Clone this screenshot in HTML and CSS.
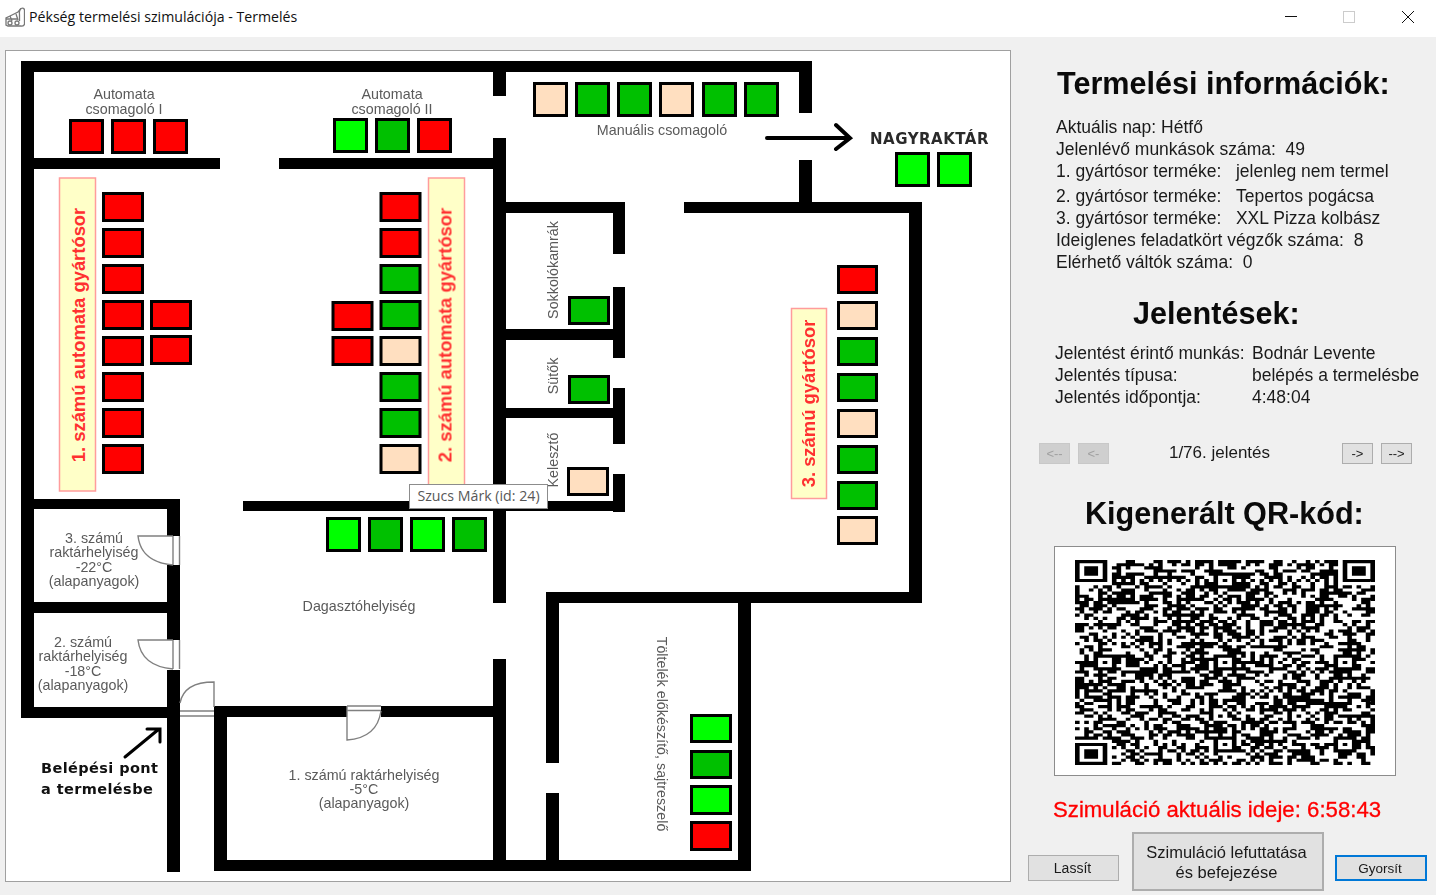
FILE: index.html
```html
<!DOCTYPE html>
<html lang="hu">
<head>
<meta charset="utf-8">
<title>Pékség termelési szimulációja - Termelés</title>
<link rel="stylesheet" href="styles.css">
</head>
<body>
<div class="window">
  <header class="titlebar">
    <svg class="app-icon" viewBox="0 0 20 20">
      <path class="ic" d="M13 5 L16 1.5 Q19 .5 19.5 3 V17 Q19 19.5 16 19 H3 L1 18 V11 L5 9 L13 5 Z"/>
      <path class="ic" d="M16 1.5 Q14 3 14.5 8 V14 M1 12 H13 M5 9 L7 14 M11 7 L13 13"/>
      <circle class="ic" cx="5" cy="16" r="2"/><circle class="ic" cx="12" cy="16" r="2"/>
    </svg>
    <span class="title">Pékség termelési szimulációja - Termelés</span>
    <div class="controls">
      <svg class="ctl" viewBox="0 0 12 12"><path class="ctl-on" d="M0 5.500 H12"/></svg>
      <svg class="ctl" viewBox="0 0 12 12"><rect class="ctl-off" x=".5" y=".5" width="11" height="11"/></svg>
      <svg class="ctl ctl-close" viewBox="0 0 12 12"><path class="ctl-on" d="M0 0 L12 12 M12 0 L0 12"/></svg>
    </div>
  </header>
  <main class="content">
    <section class="map">
      <svg class="plan" viewBox="6 51 1004 830">
        <g class="walls">
          <rect x="21" y="61" width="791" height="11"/><rect x="21" y="61" width="13" height="657"/>
          <rect x="799" y="61" width="13" height="52"/><rect x="493" y="61" width="13" height="35"/>
          <rect x="493" y="138" width="13" height="465"/><rect x="493" y="659" width="13" height="212"/>
          <rect x="34" y="158" width="186" height="11"/><rect x="279" y="158" width="214" height="11"/>
          <rect x="799" y="160" width="13" height="42"/><rect x="684" y="202" width="238" height="11"/>
          <rect x="909" y="202" width="13" height="401"/><rect x="506" y="202" width="119" height="11"/>
          <rect x="613" y="202" width="12" height="52"/><rect x="613" y="287" width="12" height="71"/>
          <rect x="506" y="329" width="107" height="11"/><rect x="613" y="388" width="12" height="56"/>
          <rect x="506" y="408" width="107" height="10"/><rect x="613" y="474" width="12" height="38"/>
          <rect x="243" y="501" width="382" height="10"/><rect x="21" y="499" width="159" height="10"/>
          <rect x="167" y="499" width="13" height="37"/><rect x="167" y="565" width="13" height="75"/>
          <rect x="167" y="670" width="13" height="202"/><rect x="34" y="602" width="133" height="11"/>
          <rect x="21" y="707" width="146" height="11"/><rect x="214" y="706" width="133" height="11"/>
          <rect x="381" y="706" width="125" height="11"/><rect x="214" y="706" width="13" height="165"/>
          <rect x="214" y="860" width="537" height="11"/><rect x="738" y="592" width="13" height="279"/>
          <rect x="546" y="592" width="376" height="11"/><rect x="546" y="592" width="13" height="171"/>
          <rect x="546" y="793" width="13" height="67"/>
        </g>
        <g class="doors">
          <path d="M173 536 V565 M179.500 536 V565 M173 536 H138 Q141 562 173 565"/>
          <path d="M173 640 V669 M179.500 640 V669 M173 640 H138 Q141 666 173 669"/>
          <path d="M180 711 H214 M180 716 H214 M214 707 V682 Q184 682 180 703"/>
          <path d="M347 706 H381 M347 710.500 H381 M347 706 V740 Q377 738 381 711"/>
        </g>
        <g class="banners">
          <rect x="59.500" y="178" width="36" height="313"/>
          <rect x="428.500" y="178" width="36" height="312"/>
          <rect x="791.500" y="308.500" width="35" height="190"/>
        </g>
        <g class="banner-text">
          <text x="84.500" y="335" transform="rotate(-90 84.500 335)">1. számú automata gyártósor</text>
          <text x="451.500" y="335" transform="rotate(-90 451.500 335)">2. számú automata gyártósor</text>
          <text x="814.500" y="403.500" transform="rotate(-90 814.500 403.500)">3. számú gyártósor</text>
        </g>
        <g class="st">
          <rect class="red" x="70.500" y="120.500" width="32" height="32"/><rect class="red" x="112.500" y="120.500" width="32" height="32"/><rect class="red" x="154.500" y="120.500" width="32" height="32"/>
          <rect class="lime" x="334.500" y="119.500" width="32" height="32"/><rect class="dark" x="376.500" y="119.500" width="32" height="32"/><rect class="red" x="418.500" y="119.500" width="32" height="32"/>
          <rect class="peach" x="534.500" y="83.500" width="32" height="32"/><rect class="dark" x="576.500" y="83.500" width="32" height="32"/><rect class="dark" x="618.500" y="83.500" width="32" height="32"/><rect class="peach" x="660.500" y="83.500" width="32" height="32"/><rect class="dark" x="703.500" y="83.500" width="32" height="32"/><rect class="dark" x="745.500" y="83.500" width="32" height="32"/>
          <rect class="lime" x="896.500" y="153.500" width="32" height="32"/><rect class="lime" x="938.500" y="153.500" width="32" height="32"/>
          <rect class="lime" x="327.500" y="518.500" width="32" height="32"/><rect class="dark" x="369.500" y="518.500" width="32" height="32"/><rect class="lime" x="411.500" y="518.500" width="32" height="32"/><rect class="dark" x="453.500" y="518.500" width="32" height="32"/>

          <rect class="red" x="103.500" y="193.500" width="39" height="27"/><rect class="red" x="103.500" y="229.500" width="39" height="27"/><rect class="red" x="103.500" y="265.500" width="39" height="27"/><rect class="red" x="103.500" y="301.500" width="39" height="27"/><rect class="red" x="103.500" y="337.500" width="39" height="27"/><rect class="red" x="103.500" y="373.500" width="39" height="27"/><rect class="red" x="103.500" y="409.500" width="39" height="27"/><rect class="red" x="103.500" y="445.500" width="39" height="27"/>
          <rect class="red" x="151.500" y="301.500" width="39" height="27"/><rect class="red" x="151.500" y="336.500" width="39" height="27"/>

          <rect class="red" x="381" y="193.500" width="39" height="27"/><rect class="red" x="381" y="229.500" width="39" height="27"/><rect class="dark" x="381" y="265.500" width="39" height="27"/><rect class="dark" x="381" y="301.500" width="39" height="27"/><rect class="peach" x="381" y="337.500" width="39" height="27"/><rect class="dark" x="381" y="373.500" width="39" height="27"/><rect class="dark" x="381" y="409.500" width="39" height="27"/><rect class="peach" x="381" y="445.500" width="39" height="27"/>
          <rect class="red" x="333" y="302.500" width="39" height="27"/><rect class="red" x="333" y="337.500" width="39" height="27"/>

          <rect class="red" x="838.500" y="266.500" width="38" height="26"/><rect class="peach" x="838.500" y="302.500" width="38" height="26"/><rect class="dark" x="838.500" y="338.500" width="38" height="26"/><rect class="dark" x="838.500" y="374.500" width="38" height="26"/><rect class="peach" x="838.500" y="410.500" width="38" height="26"/><rect class="dark" x="838.500" y="446.500" width="38" height="26"/><rect class="dark" x="838.500" y="482.500" width="38" height="26"/><rect class="peach" x="838.500" y="517.500" width="38" height="26"/>

          <rect class="dark" x="569.500" y="297.500" width="39" height="26"/><rect class="dark" x="569.500" y="376.500" width="39" height="26"/><rect class="peach" x="568.500" y="468.500" width="39" height="26"/>
          <rect class="lime" x="691.500" y="715.500" width="39" height="26"/><rect class="dark" x="691.500" y="751.500" width="39" height="26"/><rect class="lime" x="691.500" y="786.500" width="39" height="27"/><rect class="red" x="691.500" y="822.500" width="39" height="27"/>
        </g>
        <g class="lbl">
          <text x="124" y="99">Automata</text><text x="124" y="114">csomagoló I</text>
          <text x="392" y="99">Automata</text><text x="392" y="114">csomagoló II</text>
          <text x="662" y="135">Manuális csomagoló</text>
          <text x="359" y="611">Dagasztóhelyiség</text>
          <text x="94" y="543">3. számú</text><text x="94" y="557">raktárhelyiség</text><text x="94" y="572">-22°C</text><text x="94" y="586">(alapanyagok)</text>
          <text x="83" y="647">2. számú</text><text x="83" y="661">raktárhelyiség</text><text x="83" y="676">-18°C</text><text x="83" y="690">(alapanyagok)</text>
          <text x="364" y="780">1. számú raktárhelyiség</text><text x="364" y="794">-5°C</text><text x="364" y="808">(alapanyagok)</text>
          <text x="558" y="270" transform="rotate(-90 558 270)">Sokkolókamrák</text>
          <text x="558" y="376" transform="rotate(-90 558 376)">Sütők</text>
          <text x="558" y="460" transform="rotate(-90 558 460)">Kelesztő</text>
          <text x="657" y="734" transform="rotate(90 657 734)">Töltelék előkészítő, sajtreszelő</text>
        </g>
        <text class="store" x="870" y="144">NAGYRAKTÁR</text>
        <text class="entry" x="41" y="773">Belépési pont</text>
        <text class="entry" x="41" y="794">a termelésbe</text>
        <path class="arrow big" d="M767 138 H849 M836 125 L850 138 L836 149"/>
        <path class="arrow small" d="M125 757 L159 729 M147 729 H160 V742"/>
      </svg>
      <div class="tooltip">Szucs Márk (id: 24)</div>
    </section>
    <aside class="side">
      <h2 class="head head-info">Termelési információk:</h2>
      <div class="info">
        <div class="row">Aktuális nap: Hétfő</div>
        <div class="row">Jelenlévő munkások száma:&nbsp; 49</div>
        <div class="row">1. gyártósor terméke:&nbsp;&nbsp;&nbsp;jelenleg nem termel</div>
        <div class="row row-gap">2. gyártósor terméke:&nbsp;&nbsp;&nbsp;Tepertos pogácsa</div>
        <div class="row">3. gyártósor terméke:&nbsp;&nbsp;&nbsp;XXL Pizza kolbász</div>
        <div class="row">Ideiglenes feladatkört végzők száma:&nbsp; 8</div>
        <div class="row">Elérhető váltók száma:&nbsp; 0</div>
      </div>
      <h2 class="head head-rep">Jelentések:</h2>
      <div class="report">
        <span>Jelentést érintő munkás:</span><span>Bodnár Levente</span>
        <span>Jelentés típusa:</span><span>belépés a termelésbe</span>
        <span>Jelentés időpontja:</span><span>4:48:04</span>
      </div>
      <div class="nav">
        <button class="nbtn" disabled>&lt;--</button>
        <button class="nbtn" disabled>&lt;-</button>
        <span class="count">1/76. jelentés</span>
        <button class="nbtn">-&gt;</button>
        <button class="nbtn">--&gt;</button>
      </div>
      <h2 class="head head-qr">Kigenerált QR-kód:</h2>
      <div class="qrbox"><svg id="qr" class="qr" viewBox="0 0 65 65" preserveAspectRatio="none"><path id="qrpath"/></svg></div>
      <div class="clock">Szimuláció aktuális ideje: 6:58:43</div>
      <div class="actions">
        <button class="btn">Lassít</button>
        <button class="btn big-btn">Szimuláció lefuttatása<br>és befejezése</button>
        <button class="btn focus">Gyorsít</button>
      </div>
    </aside>
  </main>
</div>
<script src="qr.js"></script>
</body>
</html>
```
FILE: styles.css
```css
* { box-sizing: border-box; }
html, body { margin: 0; height: 100%; overflow: hidden; }
body { background: #f0f0f0; font-family: "Liberation Sans", Arial, sans-serif; color: #111; }
.window { width: 1436px; height: 895px; display: flex; flex-direction: column; }

.titlebar { height: 37px; background: #fff; display: flex; align-items: center; padding-left: 5px; flex: none; }
.app-icon { width: 20px; height: 20px; margin-right: 4px; margin-top: -3px; }
.ic { fill: none; stroke: #777; stroke-width: 1.3; }
.title { font: 14.150px "Open Sans", "Noto Sans", sans-serif; color: #111; margin-top: -4px; }
.controls { margin-left: auto; display: flex; margin-top: -3px; padding-right: 22px; gap: 46px; }
.ctl { width: 12px; height: 12px; display: block; }
.ctl-close { margin-left: 1px; }
.ctl-on { fill: none; stroke: #111; stroke-width: 1; }
.ctl-off { fill: none; stroke: #ccc; stroke-width: 1; }

.content { flex: 1; display: flex; align-items: flex-start; }
.map { position: relative; margin: 13px 0 0 5px; width: 1006px; height: 832px; background: #fff; border: 1px solid #a0a0a0; flex: none; }
.plan { display: block; width: 1004px; height: 830px; filter: blur(.45px); }
.walls rect { fill: #000; }
.doors path { fill: none; stroke: #808080; stroke-width: 1.4; }
.banners rect { fill: #ffffc8; stroke: #ff9c9c; stroke-width: 1.5; }
.banner-text text { font: bold 18.400px "Liberation Sans", sans-serif; fill: #ff3030; text-anchor: middle; }
.st rect { stroke: #000; stroke-width: 3; }
.red { fill: #ff0000; }
.lime { fill: #00ff00; }
.dark { fill: #00c000; }
.peach { fill: #ffdfc0; }
.lbl text { font: 14.300px "Liberation Sans", sans-serif; fill: #5a5a5a; text-anchor: middle; }
.store { font: bold 15px "DejaVu Sans", sans-serif; fill: #2a2a2a; letter-spacing: .5px; }
.entry { font: bold 14.500px "DejaVu Sans", sans-serif; fill: #111; letter-spacing: .4px; }
.arrow { fill: none; stroke: #000; stroke-linecap: round; stroke-linejoin: miter; }
.arrow.big { stroke-width: 4; }
.arrow.small { stroke-width: 3; }
.tooltip { position: absolute; left: 403px; top: 433px; width: 139px; height: 25px; background: #fff; border: 1px solid #8c8c8c; font: 14.200px/22px "Open Sans", sans-serif; color: #575757; text-align: center; white-space: nowrap; }

.side { flex: 1; position: relative; padding-top: 28px; font-size: 17.500px; color: #1a1a1a; }
.head { margin: 0; font: bold 30.600px/36px "Liberation Sans", sans-serif; color: #0a0a0a; white-space: nowrap; }
.head-info { padding-left: 46px; }
.info { margin: 15px 0 0 45px; }
.row { height: 22px; line-height: 22px; white-space: nowrap; }
.row-gap { margin-top: 3px; }
.head-rep { margin-top: 22px; padding-left: 122px; }
.report { margin: 11px 0 0 44px; display: grid; grid-template-columns: 197px auto; grid-auto-rows: 22px; line-height: 22px; white-space: nowrap; }
.nav { margin: 34px 0 0 28px; display: flex; align-items: center; height: 22px; gap: 8px; width: 373px; }
.nbtn { width: 31px; height: 21px; padding: 0; background: #e1e1e1; border: 1px solid #adadad; font: 13px "Liberation Sans", sans-serif; color: #222; }
.nbtn:disabled { background: #cfcfcf; border-color: #c8c8c8; color: #a0a0a0; }
.count { flex: 1; text-align: center; font-size: 17px; padding-right: 12px; }
.head-qr { margin-top: 31px; padding-left: 74px; }
.qrbox { margin: 15px 0 0 43px; width: 342px; height: 230px; background: #fff; border: 1px solid #8c8c8c; padding: 13px 20px 10px; }
.qr { display: block; width: 300px; height: 205px; filter: blur(.5px); }
.qr path { fill: #000; }
.clock { margin: 21px 0 0 42px; font-size: 22.200px; line-height: 26px; color: #ff0000; white-space: nowrap; -webkit-text-stroke: .3px #ff0000; }
.actions { position: absolute; left: 17px; top: 795px; width: 399px; height: 59px; display: flex; align-items: flex-end; justify-content: space-between; padding-bottom: 10px; }
.btn { width: 91px; height: 26px; padding: 0 2px 0 0; background: #e1e1e1; border: 1px solid #adadad; font: 14px "Liberation Sans", sans-serif; color: #1a1a1a; }
.big-btn { width: 192px; height: 59px; margin: 0 0 -10px 2px; padding-right: 3px; font: 16.500px/20px "Liberation Sans", sans-serif; border-width: 2px; }
.focus { width: 92px; font-size: 13.500px; border: 2px solid #0078d7; }
```
FILE: qr.js
```js
(function () {
  var N = 65, seed = 20240611;
  function rnd() {
    seed = (seed + 0x6D2B79F5) | 0;
    var t = Math.imul(seed ^ (seed >>> 15), 1 | seed);
    t = (t + Math.imul(t ^ (t >>> 7), 61 | t)) ^ t;
    return ((t ^ (t >>> 14)) >>> 0) / 4294967296;
  }
  var m = [], y, x;
  for (y = 0; y < N; y++) { m[y] = []; for (x = 0; x < N; x++) m[y][x] = rnd() < 0.52; }
  function finder(ox, oy) {
    for (var j = -1; j < 8; j++) for (var i = -1; i < 8; i++) {
      var X = ox + i, Y = oy + j;
      if (X < 0 || Y < 0 || X >= N || Y >= N) continue;
      var ring = i >= 0 && i <= 6 && j >= 0 && j <= 6 && (i === 0 || i === 6 || j === 0 || j === 6);
      var core = i >= 2 && i <= 4 && j >= 2 && j <= 4;
      m[Y][X] = ring || core;
    }
  }
  for (x = 8; x < N - 8; x++) { m[6][x] = x % 2 === 0; m[x][6] = x % 2 === 0; }
  var pos = [6, 32, 58];
  pos.forEach(function (cy) {
    pos.forEach(function (cx) {
      if ((cx === 6 && cy === 6) || (cx === 58 && cy === 6) || (cx === 6 && cy === 58)) return;
      for (var j = -2; j <= 2; j++) for (var i = -2; i <= 2; i++) {
        m[cy + j][cx + i] = Math.max(Math.abs(i), Math.abs(j)) !== 1;
      }
    });
  });
  finder(0, 0); finder(N - 7, 0); finder(0, N - 7);
  var d = "";
  for (y = 0; y < N; y++) for (x = 0; x < N; x++) if (m[y][x]) d += "M" + x + " " + y + "h1v1h-1z";
  document.getElementById("qrpath").setAttribute("d", d);
})();
```
